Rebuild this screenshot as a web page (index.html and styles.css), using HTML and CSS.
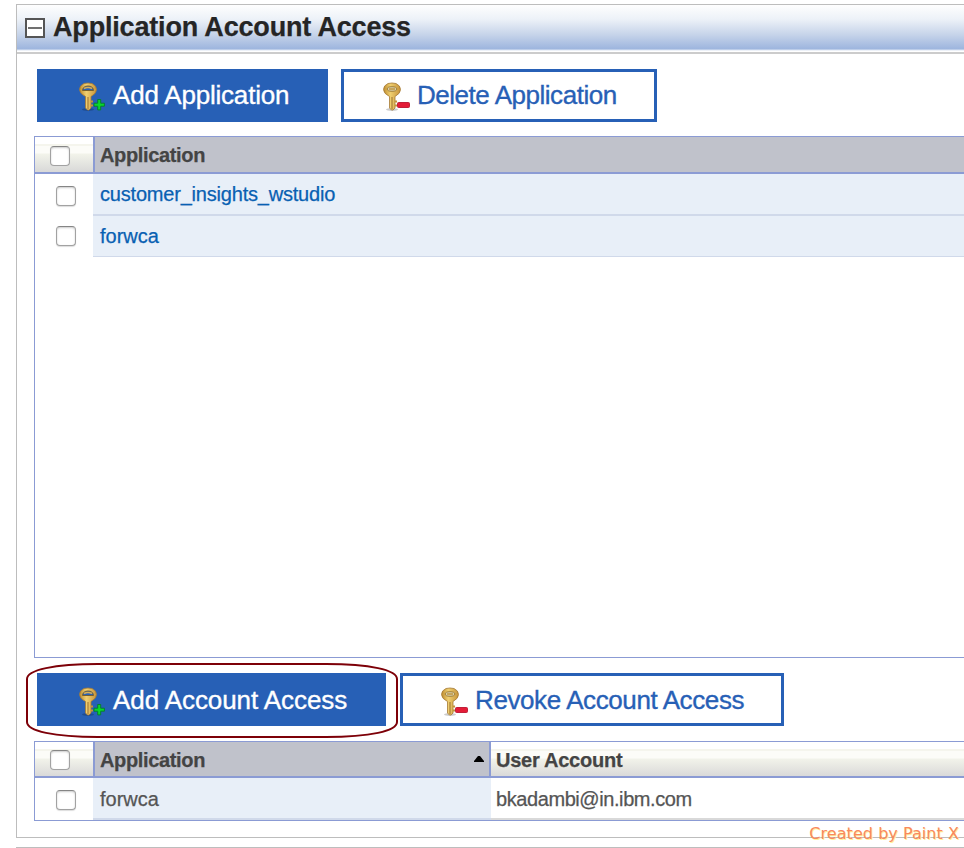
FILE: index.html
```html
<!DOCTYPE html>
<html lang="en">
<head>
<meta charset="utf-8">
<title>Application Account Access</title>
<link rel="stylesheet" href="styles.css">
</head>
<body>
<svg class="defs" width="0" height="0" aria-hidden="true">
  <defs>
    <linearGradient id="gold" x1="0" x2="1" y1="0" y2="0"><stop offset="0" stop-color="#bd8b2e"/><stop offset=".4" stop-color="#f0cf70"/><stop offset="1" stop-color="#c7943a"/></linearGradient>
    <symbol id="key" viewBox="0 0 28 30">
      <ellipse cx="10" cy="27.500" rx="6" ry="1.500" fill="#000" opacity=".2"/>
      <path fill="url(#gold)" stroke="#a47a36" stroke-width=".8" d="M6 1.500Q10 .5 14 1.500Q18.500 3.500 18.500 7.500Q18.500 11.500 13 14.500V26L11 28H9.500L7.500 26V14.500Q1.500 11.500 1.500 7.500Q1.500 3.500 6 1.500Z"/>
      <path d="M10 15v12" stroke="#997130" stroke-width="1"/>
      <path d="M13 18.500h2v2h-2M13 22.500h2v2h-2" fill="#c49339"/>
    </symbol>
    <symbol id="key-add" viewBox="0 0 28 30">
      <use href="#key"/>
      <path d="M4.500 8.500Q5 4 10 4T15.500 8.500Z" fill="#2860b6" stroke="#76602f"/>
      <path d="M6 6.500Q10 4.500 14 6.500" fill="none" stroke="#d6ae58" stroke-width="1.500"/>
      <path d="M19.700 17.500h3v3.700h3.700v3h-3.700v3.700h-3v-3.700H16v-3h3.700z" fill="#08d82b" stroke="#087c32"/>
    </symbol>
    <symbol id="key-remove" viewBox="0 0 28 30">
      <use href="#key"/>
      <ellipse cx="10" cy="7" rx="4.800" ry="2.300" fill="#d8cda8" stroke="#a38138"/>
      <path d="M7 7h6" stroke="#c19743" stroke-width="1.500"/>
      <rect x="15.500" y="20.500" width="12" height="5" rx="1" fill="#e41c37" stroke="#c0203a"/>
    </symbol>
  </defs>
</svg>
<main class="panel">
  <header class="title-bar">
    <span class="collapse"></span>
    <h1>Application Account Access</h1>
  </header>
  <div class="content">
    <div class="actions first">
      <button class="btn primary add-app"><svg class="icon"><use href="#key-add"/></svg><span>Add Application</span></button>
      <button class="btn secondary del-app"><svg class="icon"><use href="#key-remove"/></svg><span>Delete Application</span></button>
    </div>
    <section class="grid apps">
      <div class="row head"><div class="check"><i></i></div><div class="cell sorted"><b class="t-app">Application</b></div></div>
      <div class="row"><div class="check"><i></i></div><div class="cell tint"><a class="t-cust">customer_insights_wstudio</a></div></div>
      <div class="row last"><div class="check"><i></i></div><div class="cell tint"><a class="t-for">forwca</a></div></div>
    </section>
    <div class="actions second">
      <div class="marked"><button class="btn primary add-acc"><svg class="icon"><use href="#key-add"/></svg><span>Add Account Access</span></button>
        <svg class="ring" viewBox="0 0 372 75"><path d="M1 16C1 7 28 1 72 1H300C344 1 371 7 371 16V59C371 68 344 74 300 74H72C28 74 1 68 1 59Z" fill="none" stroke="#7d0008" stroke-width="2"/></svg></div>
      <button class="btn secondary rev-acc"><svg class="icon"><use href="#key-remove"/></svg><span>Revoke Account Access</span></button>
    </div>
    <section class="grid accounts">
      <div class="row head"><div class="check"><i></i></div><div class="cell sorted"><b class="t-app">Application</b><svg class="sort" viewBox="0 0 10 6"><path d="M0 6V5L4 0H6L10 5V6Z"/></svg></div><div class="cell user"><b class="t-user">User Account</b></div></div>
      <div class="row"><div class="check"><i></i></div><div class="cell tint"><span class="t-for">forwca</span></div><div class="cell user"><span class="t-mail">bkadambi@in.ibm.com</span></div></div>
    </section>
  </div>
</main>
<footer><span class="credit">Created by Paint X</span></footer>
</body>
</html>
```

FILE: styles.css
```css
* { box-sizing: border-box; }
body { margin: 0; height: 848px; padding: 4px 0 0 16px; overflow: hidden; background: #fff; font: 20px/24px "Liberation Sans", Arial, sans-serif; -webkit-text-stroke: .25px currentColor; }
.defs { position: absolute; }
.panel { height: 834px; border: solid #bdbdbd; border-width: 1px 0 1px 1px; }
.title-bar { height: 49px; display: flex; align-items: flex-start; padding: 13px 0 0 8px; border-bottom: 2px solid #ccc; background: linear-gradient(#fefefe 0, #edf2f8 14px, #c8d5ea 29px, #9db5de 44px, #dce5f3 45px, #fff 46px) top / 100% 47px no-repeat; }
.collapse { width: 20px; height: 20px; border: 2px solid #555; background: linear-gradient(#707070, #707070) center / 14px 2px no-repeat, #fff; }
h1 { margin: -6px 0 0 8px; font-size: 27px; line-height: 30px; letter-spacing: -.18px; color: #252525; white-space: nowrap; }
.content { padding: 15px 0 0 17px; }
.actions { display: flex; gap: 13px; height: 53px; margin-left: 3px; }
.btn { height: 53px; flex: none; display: flex; align-items: center; padding: 0 0 0 38px; border: 3px solid #2760b6; border-radius: 0; font: 26px/30px "Liberation Sans", Arial, sans-serif; white-space: nowrap; -webkit-text-stroke: .35px currentColor; }
.primary { background: #2760b6; color: #fff; }
.secondary { background: #fff; color: #2760b6; }
.btn .icon { width: 28px; height: 30px; margin: 4px 7px 0 0; flex: none; }
.btn span { margin-top: 1px; }
.first .btn { padding-bottom: 2px; }
.add-app { width: 291px; letter-spacing: -.2px; }
.del-app { width: 316px; letter-spacing: -.47px; }
.add-acc { width: 349px; letter-spacing: -.08px; }
.rev-acc { width: 384px; padding-left: 37px; letter-spacing: -.4px; }
.grid { border: 1px solid #8b9bd4; border-right: 0; }
.apps { height: 522px; margin-top: 14px; }
.row { display: flex; height: 42px; }
.check { width: 58px; padding: 12px 0 0 21px; flex: none; }
.check i { display: block; width: 20px; height: 20px; border: 1px solid #a2a2a2; border-top-color: #858585; border-radius: 4px; background: #fff; box-shadow: inset 0 1px 2px #ccc, 0 1px 1px #ddd; }
.cell { flex: 1; height: 42px; padding: 8px 0 0 7px; border-bottom: 2px solid #d0d9ea; color: #555; white-space: nowrap; }
.tint { background: #e8eff8; }
.tint a { color: #0860b2; }
.last .check { padding-top: 10px; }
.last .cell { height: 41px; border-bottom-width: 1px; }
.head { height: 37px; border-bottom: 2px solid #8b9bd4; background: linear-gradient(#fff 0 7px, #f5f5ed 7px 9px, #fcfcf8 9px 16px, #f2f3ea 17px, #d8d8d8 35px); }
.head .check { padding: 9px 0 0 15px; }
.head .cell { display: flex; height: 35px; padding-top: 6px; padding-left: 5px; border-bottom: 0; border-left: 2px solid #8b9bd4; color: #444; }
.head .sorted { background: #c0c2cb; }
.t-app { letter-spacing: -.35px; }
.t-user { letter-spacing: -.25px; }
.t-cust { letter-spacing: -.2px; }
.t-mail { letter-spacing: -.42px; }
.second { margin-top: 15px; gap: 14px; }
.marked { position: relative; }
.ring { position: absolute; width: 372px; height: 75px; left: -11px; top: -10px; }
.accounts { height: 80px; margin-top: 15px; }
.accounts .head { height: 36px; }
.accounts .head .cell { height: 34px; }
.accounts .head .check { padding-top: 8px; }
.accounts .sorted { flex: 0 0 396px; }
.accounts .tint { flex: 0 0 398px; }
.accounts .row:not(.head) .user { padding-left: 5px; border-bottom-color: #d9d9d9; }
.accounts .row:not(.head) .cell { padding-top: 9px; }
.sort { width: 10px; height: 6px; margin: 8px 5px 0 auto; }
footer { height: 10px; margin-top: 9px; border-top: 1px solid #bdbdbd; }
.credit { position: absolute; right: 5px; bottom: 4px; font: 16px/20px "DejaVu Sans", sans-serif; letter-spacing: .05px; color: #f9885f; text-shadow: 1px 1px 0 #fff49b; -webkit-text-stroke: 0; }
```
